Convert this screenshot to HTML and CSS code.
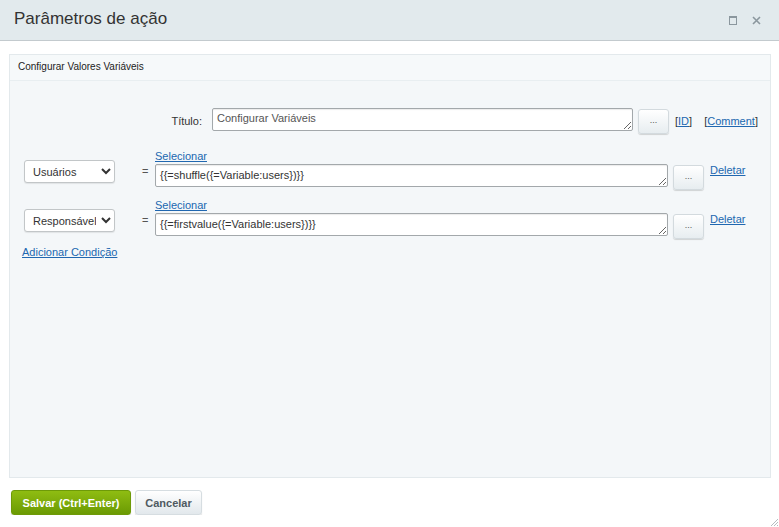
FILE: index.html
```html
<!DOCTYPE html>
<html lang="pt">
<head>
    <meta charset="UTF-8">
    <title>Parâmetros de ação</title>
    <link rel="stylesheet" href="styles.css">
</head>
<body>
    <div class="dialog-head">
        <h1>Parâmetros de ação</h1>
        <div class="head-icons">
            <span class="icon-max"></span>
            <svg class="icon-close" width="9" height="9" viewBox="0 0 9 9">
                <path d="M1 1L8 8M8 1L1 8" stroke="#8b979e" stroke-width="1.6"/>
            </svg>
        </div>
    </div>

    <div class="dialog-body">
        <div class="panel">
            <div class="panel-title">Configurar Valores Variáveis</div>
            <div class="panel-content">
                <!-- titulo -->
                <div class="title-row">
                    <label class="title-label">Título:</label>
                    <textarea class="field title-field">Configurar Variáveis</textarea>
                    <button class="dots-btn">...</button>
                    <span class="bracket">[<a href="#">ID</a>]</span>
                    <span class="bracket">[<a href="#">Comment</a>]</span>
                </div>

                <!-- condicoes -->
                <div class="cond-row">
                    <select class="var-select">
                        <option>Usuários</option>
                    </select>
                    <span class="eq">=</span>
                    <div class="cond-field">
                        <a href="#">Selecionar</a>
                        <textarea class="field value-field">{{=shuffle({=Variable:users})}}</textarea>
                    </div>
                    <button class="dots-btn">...</button>
                    <a href="#" class="del-link">Deletar</a>
                </div>
                <div class="cond-row">
                    <select class="var-select">
                        <option>Responsável</option>
                    </select>
                    <span class="eq">=</span>
                    <div class="cond-field">
                        <a href="#">Selecionar</a>
                        <textarea class="field value-field">{{=firstvalue({=Variable:users})}}</textarea>
                    </div>
                    <button class="dots-btn">...</button>
                    <a href="#" class="del-link">Deletar</a>
                </div>
                <a href="#" class="add-cond">Adicionar Condição</a>
            </div>
        </div>
    </div>

    <div class="dialog-foot">
        <button class="btn-save">Salvar (Ctrl+Enter)</button>
        <button class="btn-cancel">Cancelar</button>
    </div>

    <svg class="grip" width="8" height="8" viewBox="0 0 8 8">
        <path d="M8 1L1 8M8 4L4 8M8 7L7 8" stroke="#b5bcc0" stroke-width="1"/>
    </svg>
</body>
</html>
```

FILE: styles.css
```css
body {
    margin: 0;
    background: #fff;
    font-family: "Liberation Sans", Arial, sans-serif;
    color: #333;
    font-size: 11px;
}

a {
    color: #2067b0;
    text-decoration: underline;
}

.dialog-head {
    height: 40px;
    background: #e2eaed;
    border-bottom: 1px solid #c3cace;
    display: flex;
    align-items: center;
    justify-content: space-between;
    padding: 0 18px 0 14px;
}

.dialog-head h1 {
    margin: 0 0 3px;
    font-size: 17px;
    font-weight: normal;
    color: #333;
}

.head-icons {
    display: flex;
    align-items: center;
    gap: 15px;
}

.icon-max {
    width: 6px;
    height: 6px;
    border: 1px solid #8b979e;
    border-top-width: 2px;
}

.dialog-body {
    padding: 13px 8px 0 9px;
}

.panel {
    height: 422px;
    border: 1px solid #e3e9ec;
    background: #f4f7f9;
    display: flex;
    flex-direction: column;
}

.panel-title {
    height: 25px;
    line-height: 24px;
    padding-left: 8px;
    font-size: 10px;
    color: #222;
    background: #f6f9fa;
    border-bottom: 1px solid #e8eef1;
}

.panel-content {
    padding: 27px 0 0 12px;
}

.title-row {
    display: flex;
    align-items: flex-start;
    padding-left: 140px;
}

.title-label {
    width: 40px;
    margin-right: 10px;
    text-align: right;
    padding-top: 7px;
}

.field {
    box-sizing: border-box;
    height: 23px;
    border: 1px solid #a3a8ab;
    border-radius: 2px;
    box-shadow: inset 0 1px 1px rgba(0, 0, 0, 0.08);
    background: #fff;
    font-family: "Liberation Sans", Arial, sans-serif;
    font-size: 11px;
    color: #333;
    padding: 4px 4px 3px;
    margin: 0;
    overflow: hidden;
}

.title-field {
    width: 421px;
    color: #555;
    padding-top: 3px;
}

.value-field {
    width: 513px;
    display: block;
}

.dots-btn {
    box-sizing: border-box;
    width: 31px;
    height: 25px;
    margin: 1px 0 0 5px;
    padding: 0 0 4px;
    border: 1px solid #d3dade;
    border-radius: 3px;
    background: linear-gradient(#ffffff, #e7edf0);
    box-shadow: 0 1px 1px rgba(0, 0, 0, 0.15);
    color: #555;
    font-size: 9px;
    font-family: "Liberation Sans", Arial, sans-serif;
}

.bracket {
    padding-top: 7px;
    margin-left: 6px;
    color: #333;
}

.bracket + .bracket {
    margin-left: 12px;
}

.cond-row {
    display: flex;
    align-items: flex-start;
    margin-top: 15px;
    padding-left: 2px;
}

.cond-row + .cond-row {
    margin-top: 8px;
}

.var-select {
    box-sizing: border-box;
    width: 91px;
    height: 23px;
    margin-top: 11px;
    border: 1px solid #c2c6c8;
    border-radius: 3px;
    background: #fff;
    box-shadow: 0 1px 1px rgba(0, 0, 0, 0.08);
    font-family: "Liberation Sans", Arial, sans-serif;
    font-size: 11px;
    color: #333;
    padding: 0 2px 0 4px;
}

.eq {
    width: 40px;
    padding-top: 16px;
    padding-left: 27px;
    box-sizing: border-box;
    color: #555;
}

.cond-field a {
    display: block;
    line-height: 14px;
    height: 15px;
}

.cond-field {
    display: flex;
    flex-direction: column;
}

.cond-row .dots-btn {
    margin-top: 16px;
}

.del-link {
    margin: 15px 0 0 6px;
}

.add-cond {
    display: inline-block;
    margin-top: 7px;
}

.dialog-foot {
    display: flex;
    gap: 4px;
    padding: 12px 0 0 11px;
}

.dialog-foot button {
    height: 25px;
    border-radius: 3px;
    font-family: "Liberation Sans", Arial, sans-serif;
    font-weight: bold;
    font-size: 11px;
    padding: 0;
}

.btn-save {
    width: 120px;
    border: 1px solid #6e9a08;
    background: linear-gradient(#8fbd12, #6b9a03);
    color: #fff;
    box-shadow: 0 1px 1px rgba(0, 0, 0, 0.2);
}

.btn-cancel {
    width: 67px;
    border: 1px solid #d6dde1;
    background: linear-gradient(#ffffff, #e2e8ec);
    color: #4f5a61;
    box-shadow: 0 1px 1px rgba(0, 0, 0, 0.15);
}

.grip {
    position: absolute;
    right: 1px;
    bottom: 1px;
}
```
